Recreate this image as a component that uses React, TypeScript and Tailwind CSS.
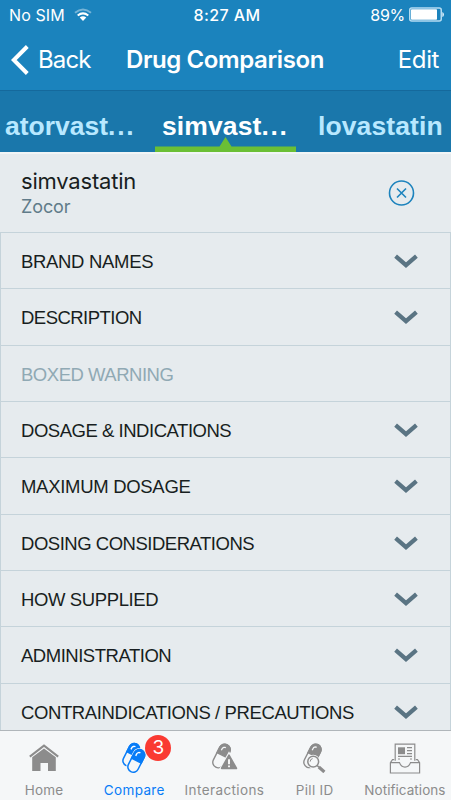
import type { ReactNode } from "react";
import clsx from "clsx";

interface Section {
  label: string;
  disabled?: boolean;
  tracking: string;
}

const sections: Section[] = [
  { label: "BRAND NAMES", tracking: "tracking-[-0.32px]" },
  { label: "DESCRIPTION", tracking: "tracking-[-0.53px]" },
  { label: "BOXED WARNING", disabled: true, tracking: "tracking-[-0.48px]" },
  { label: "DOSAGE & INDICATIONS", tracking: "tracking-[-0.47px]" },
  { label: "MAXIMUM DOSAGE", tracking: "tracking-[-0.3px]" },
  { label: "DOSING CONSIDERATIONS", tracking: "tracking-[-0.48px]" },
  { label: "HOW SUPPLIED", tracking: "tracking-[-0.38px]" },
  { label: "ADMINISTRATION", tracking: "tracking-[-0.48px]" },
  { label: "CONTRAINDICATIONS / PRECAUTIONS", tracking: "tracking-[-0.39px]" },
];

const WifiIcon = () => (
  <svg width="18" height="14" viewBox="0 0 18 14" fill="none" stroke="white" strokeWidth="2">
    <path d="M1 4.7Q9 -1.8 17 4.7" opacity="0.4" />
    <path d="M3.7 7.5Q9 3.2 14.3 7.5" />
    <path d="M5.7 9.4Q9 7 12.3 9.4L9 13Z" fill="white" stroke="none" />
  </svg>
);

const BatteryIcon = () => (
  <svg width="36" height="16" viewBox="0 0 36 16">
    <rect x="0.75" y="1" width="31.5" height="13" rx="2" fill="none" stroke="#b5dcf2" strokeWidth="1.5" />
    <rect x="2" y="2.2" width="26" height="10.6" rx="0.8" fill="white" />
    <path d="M33.3 5Q35 5.5 35 7.5T33.3 10Z" fill="#dceffa" />
  </svg>
);

const Chevron = () => (
  <svg className="mt-[2px]" width="24" height="15" viewBox="0 0 24 15" fill="none" stroke="#5a7483" strokeWidth="4.2">
    <path d="M1.6 2.2L12 11.2L22.4 2.2" />
  </svg>
);

const HomeIcon = () => (
  <svg width="32" height="28" viewBox="0 0 32 28" fill="#8c8c8c">
    <path d="M1.8 12.6L16 1.6L30.2 12.6" fill="none" stroke="#8c8c8c" strokeWidth="2" />
    <path d="M4.2 13.2L16 4.4L27.8 13.2V27H20V19H12.5V27H4.2Z" />
  </svg>
);

const CompareIcon = () => (
  <svg className="-mt-[2px]" width="26" height="33" viewBox="0 0 26 33" fill="none" stroke="#087cf7" strokeWidth="1.5">
    <g transform="rotate(27 10 14)">
      <rect x="4.8" y="1.6" width="10.5" height="24" rx="5.25" fill="#f5f7f8" />
      <path d="M4.8 13V7a5.25 5.25 0 0 1 10.5 0v6Z" fill="#087cf7" />
      <path d="M7.4 9V7.3a2.7 2.7 0 0 1 2.8-2.7" stroke="white" strokeWidth="1.4" />
    </g>
    <g transform="rotate(27 15 20)">
      <rect x="9.8" y="7.8" width="10.8" height="24" rx="5.4" fill="#f5f7f8" stroke="#f5f7f8" strokeWidth="3" />
      <rect x="9.8" y="7.8" width="10.8" height="24" rx="5.4" fill="#f5f7f8" />
      <path d="M9.8 19.5V13.2a5.4 5.4 0 0 1 10.8 0v6.3Z" fill="#087cf7" />
      <path d="M12.4 15.5V13.4a2.7 2.7 0 0 1 2.8-2.7" stroke="white" strokeWidth="1.4" />
    </g>
  </svg>
);

const InteractionsIcon = () => (
  <svg className="-mt-[2px]" width="27" height="30" viewBox="0 0 27 30" fill="none" stroke="#8c8c8c" strokeWidth="1.4">
    <g transform="rotate(27 10.5 14)">
      <rect x="5" y="1.4" width="11" height="25.2" rx="5.5" />
      <path d="M5 13V6.9a5.5 5.5 0 0 1 11 0V13Z" fill="#8c8c8c" />
      <path d="M7.8 9V7.3a2.7 2.7 0 0 1 2.8-2.7" stroke="#f5f7f8" strokeWidth="1.3" />
    </g>
    <path d="M18 13.4L25.2 26.3H10.8Z" fill="#f5f7f8" stroke="#f5f7f8" strokeWidth="4" />
    <path d="M18 13.4L25.2 26.3H10.8Z" fill="#8c8c8c" strokeWidth="2" strokeLinejoin="round" />
    <path d="M18 17.2V22.3M18 23.6V25.3" stroke="white" strokeWidth="1.8" />
  </svg>
);

const PillIcon = () => (
  <svg className="-mt-[2px]" width="25" height="31" viewBox="0 0 25 31" fill="none" stroke="#8c8c8c" strokeWidth="1.4">
    <g transform="rotate(27 10.5 14)">
      <rect x="5" y="1.4" width="10.8" height="25" rx="5.4" />
      <path d="M5 13V6.8a5.4 5.4 0 0 1 10.8 0V13Z" fill="#8c8c8c" />
      <path d="M7.6 9V7a2.6 2.6 0 0 1 2.7-2.6" stroke="#f5f7f8" strokeWidth="1.3" />
    </g>
    <circle cx="11.2" cy="19.6" r="5.8" fill="#f5f7f8" stroke="#f5f7f8" strokeWidth="2.2" />
    <circle cx="11.2" cy="19.6" r="5.4" fill="#f5f7f8" strokeWidth="1.5" />
    <path d="M8.2 19.6a3 3 0 0 1 2.4-3" strokeWidth="1" />
    <path d="M15 23.4L17 25.2" strokeWidth="1.5" />
    <path d="M16.8 25L22.4 30" strokeWidth="3.2" />
  </svg>
);

const NotificationsIcon = () => (
  <svg width="32" height="31" viewBox="0 0 32 31" fill="none" stroke="#8c8c8c" strokeWidth="1.2">
    <path d="M6.2 17.8V1.2H25.8V17.8" />
    <path d="M9 4.3H16V11.2H9Z" fill="#8c8c8c" stroke="none" />
    <path d="M18 4.6H23M18 7.6H23M18 10.6H23M9 13.4H23M9 16H11M21 16H23" />
    <path d="M5.2 16.7H3.5L1.4 19.6V30H30.6V19.6L28.5 16.7H26.8" />
    <path d="M1.4 19.6H10.5C11.5 22.4 13.3 24.1 16 24.1S20.5 22.4 21.5 19.6H30.6" />
  </svg>
);

interface TabItem {
  label: string;
  icon: ReactNode;
  badge?: number;
  className: string;
}

const tabItems: TabItem[] = [
  { label: "Home", icon: <HomeIcon />, className: "tracking-[0.2px]" },
  { label: "Compare", icon: <CompareIcon />, badge: 3, className: "tracking-[0.35px]" },
  { label: "Interactions", icon: <InteractionsIcon />, className: "tracking-[0.4px]" },
  { label: "Pill ID", icon: <PillIcon />, className: "tracking-[0.3px]" },
  { label: "Notifications", icon: <NotificationsIcon />, className: "tracking-[0.05px]" },
];

const Header = () => (
  <header className="h-[91px] shrink-0 border-b border-[#15699c] bg-[#1b83bd] text-white">
    <div className="grid h-[30px] grid-cols-3 items-center pr-[6px] pl-[9px] text-[16px]">
      <div className="flex items-center gap-[9px]">
        <span className="tracking-[0.1px]">No SIM</span>
        <WifiIcon />
      </div>
      <span className="text-center font-medium tracking-[0.4px]">8:27 AM</span>
      <div className="flex items-center justify-end gap-1">
        <span className="tracking-[-0.3px]">89%</span>
        <BatteryIcon />
      </div>
    </div>
    <div className="grid h-[60px] grid-cols-[1fr_auto_1fr] items-center pr-3 pl-[11px] text-[24px]">
      <button className="flex items-center gap-[9px] tracking-[-0.9px]">
        <svg width="18" height="30" viewBox="0 0 18 30" fill="none" stroke="white" strokeWidth="4">
          <path d="M16.3 1.5L2.8 15L16.3 28.5" />
        </svg>
        Back
      </button>
      <h1 className="font-semibold tracking-[-0.4px]">Drug Comparison</h1>
      <button className="text-right tracking-[-0.4px]">Edit</button>
    </div>
  </header>
);

const DrugTabs = () => (
  <nav className="grid h-[61px] shrink-0 grid-cols-[155px_141px_155px] bg-[#1a77ab] font-['Liberation_Sans',Arial,sans-serif] text-[26.5px] leading-[70px] font-bold text-[#b8e8ff]">
    <span className="pl-[5px]">
      atorvast<span className="tracking-[1.7px]">...</span>
    </span>
    <div className="flex flex-col text-white">
      <span className="h-[46px] pl-[7px] tracking-[0.1px]">
        simvast<span className="tracking-[1.7px]">...</span>
      </span>
      <svg width="141" height="15" viewBox="0 0 141 15" fill="#6bbf35">
        <path d="M0 9.5H64.5L70.5 0L76.5 9.5H141V15H0Z" />
      </svg>
    </div>
    <span className="pl-[22px] tracking-[0.1px]">lovastatin</span>
  </nav>
);

const App = () => {
  return (
    <div className="flex h-[800px] w-[451px] flex-col overflow-hidden bg-[#e6ebee] font-[Inter,sans-serif]">
      <Header />
      <DrugTabs />
      <main className="min-h-0 flex-1 overflow-hidden">
        <div className="flex h-[80px] items-center justify-between border-t-2 border-[#f1f5f6] pr-9 pl-[21px]">
          <div>
            <p className="text-[22px] leading-[27px] tracking-[-0.2px] text-[#181e21]">simvastatin</p>
            <p className="text-[18px] leading-[24px] tracking-[-0.1px] text-[#607b89]">Zocor</p>
          </div>
          <svg width="27" height="27" viewBox="0 0 27 27" fill="none" stroke="#1d83bd" strokeWidth="1.6">
            <circle cx="13.5" cy="13" r="12" />
            <path d="M9 8.5L18 17.5M18 8.5L9 17.5" />
          </svg>
        </div>
        {sections.map((section) => (
          <div
            key={section.label}
            className="flex h-[56.33px] items-center justify-between border-x border-t border-[#c5d3da] pr-8 pl-[20px] font-['Liberation_Sans',Arial,sans-serif]"
          >
            <span
              className={clsx(
                "pt-[2.5px] text-[18.5px]",
                section.tracking,
                section.disabled ? "text-[#90a9b4]" : "text-[#181e21]"
              )}
            >
              {section.label}
            </span>
            {!section.disabled && <Chevron />}
          </div>
        ))}
      </main>
      <footer className="grid h-[70px] shrink-0 grid-cols-5 border-t border-[#b0b6ba] bg-[#f5f7f8]">
        {tabItems.map((item) => (
          <button
            key={item.label}
            className={clsx(
              "flex flex-col items-center pr-[2px] text-[13.5px]",
              item.badge ? "text-[#087cf7]" : "text-[#8c8c8c]"
            )}
          >
            <span className="relative flex h-[49px] items-center justify-center pt-[5px]">
              {item.icon}
              {item.badge && (
                <span className="absolute top-[4px] left-[24px] flex size-[26px] items-center justify-center rounded-full bg-[#fa3a32] text-[19px] text-white">
                  {item.badge}
                </span>
              )}
            </span>
            <span className={clsx("leading-[20px]", item.className)}>{item.label}</span>
          </button>
        ))}
      </footer>
    </div>
  );
};

export default App;
